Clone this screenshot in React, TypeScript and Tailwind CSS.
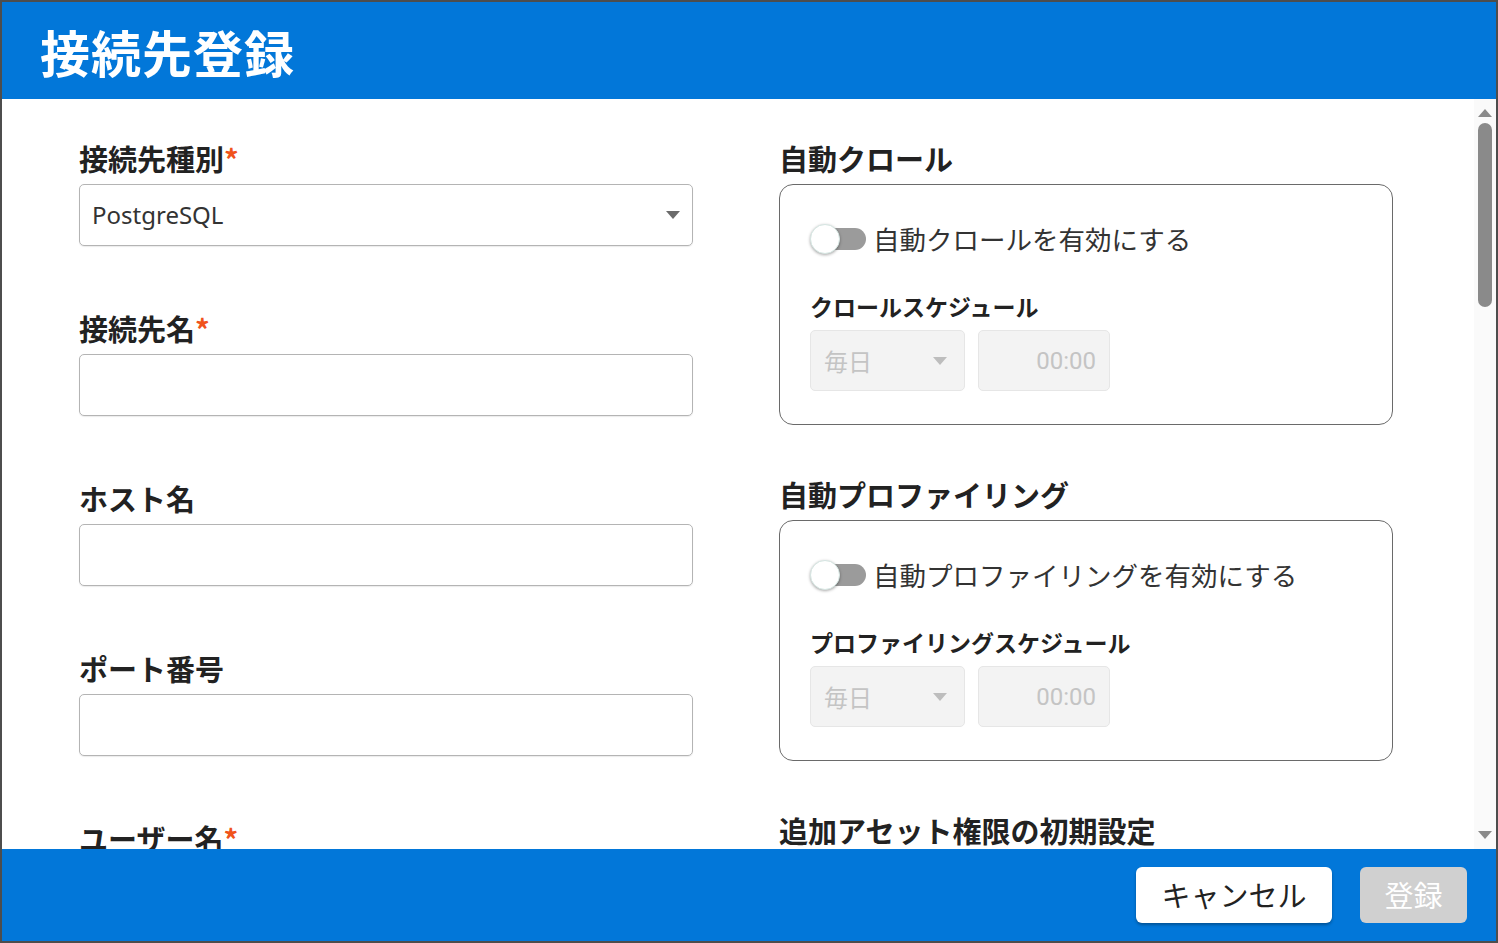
import React from "react";

const jp = "font-['Noto_Sans_CJK_JP','Noto_Sans',sans-serif]";

function Required() {
  return <span className="text-[#f0531c]">*</span>;
}

function Caret({ color }: { color: string }) {
  return (
    <svg width="14" height="8" viewBox="0 0 14 8">
      <path d="M0 0h14L7 8z" fill={color} />
    </svg>
  );
}

function Field({ label, required, value }: { label: string; required?: boolean; value?: string }) {
  return (
    <div className="mb-[65px]">
      <div className={`${jp} mb-[9px] text-[29px] font-bold leading-[34px] text-[#222]`}>
        {label}
        {required && <Required />}
      </div>
      <div className="flex h-[62px] items-center justify-between rounded-[5px] border border-[#b4b4b4] pl-[12px] pr-[12px] shadow-[0_1px_1px_rgba(0,0,0,0.08)]">
        <span className="font-['Noto_Sans',sans-serif] text-[24px] text-[#333]">{value}</span>
        {value && <Caret color="#6b6b6b" />}
      </div>
    </div>
  );
}

function Toggle() {
  return (
    <div className="relative h-[30px] w-[56px] shrink-0">
      <div className="absolute left-[6px] top-[4px] h-[22px] w-[50px] rounded-full bg-[#9b9b9b]" />
      <div className="absolute left-0 top-0 h-[30px] w-[30px] rounded-full border border-[#d5e6e2] bg-white shadow-[0_1px_3px_rgba(0,0,0,0.35)]" />
    </div>
  );
}

function ScheduleBox({ toggleLabel, scheduleLabel }: { toggleLabel: string; scheduleLabel: string }) {
  return (
    <div className="rounded-[14px] border-[1.5px] border-[#6a6a6a] pb-[33px] pl-[30px] pt-[37px]">
      <div className="flex h-[34px] items-center gap-[7px]">
        <Toggle />
        <span className={`${jp} text-[26.5px] leading-[34px] text-[#333]`}>{toggleLabel}</span>
      </div>
      <div className={`${jp} mt-[36px] text-[23px] font-bold leading-[28px] text-[#222]`}>{scheduleLabel}</div>
      <div className="mt-[10px] flex gap-[13px]">
        <div className="flex h-[61px] w-[155px] items-center justify-between rounded-[5px] border border-[#e6e6e6] bg-[#f3f3f3] pl-[13px] pr-[17px]">
          <span className={`${jp} text-[24px] text-[#c4c4c4]`}>毎日</span>
          <Caret color="#bdbdbd" />
        </div>
        <div className="flex h-[61px] w-[132px] items-center justify-end rounded-[5px] border border-[#e6e6e6] bg-[#f3f3f3] pr-[13px]">
          <span className="font-['Roboto',sans-serif] text-[24px] text-[#c4c4c4]">00:00</span>
        </div>
      </div>
    </div>
  );
}

function Section({ title, children }: { title: string; children?: React.ReactNode }) {
  return (
    <div className="mb-[52px]">
      <div className={`${jp} mb-[9px] text-[29px] font-bold leading-[34px] text-[#222]`}>{title}</div>
      {children}
    </div>
  );
}

export default function App() {
  return (
    <div className="flex h-[943px] w-[1498px] flex-col overflow-hidden border-2 border-[#4d4d4d] bg-white">
      {/* Header */}
      <header className="flex h-[97px] shrink-0 items-center bg-[#0277d9] pl-[38px]">
        <h1 className={`${jp} text-[50px] font-bold leading-none tracking-[1px] text-white`}>接続先登録</h1>
      </header>

      {/* Body */}
      <div className="flex min-h-0 flex-1">
        <div className="min-w-0 flex-1 overflow-hidden">
          <div className="grid grid-cols-[614px_614px] gap-x-[86px] pl-[77px] pt-[42px]">
            <div>
              <Field label="接続先種別" required value="PostgreSQL" />
              <Field label="接続先名" required />
              <Field label="ホスト名" />
              <Field label="ポート番号" />
              <Field label="ユーザー名" required />
            </div>
            <div>
              <Section title="自動クロール">
                <ScheduleBox toggleLabel="自動クロールを有効にする" scheduleLabel="クロールスケジュール" />
              </Section>
              <Section title="自動プロファイリング">
                <ScheduleBox toggleLabel="自動プロファイリングを有効にする" scheduleLabel="プロファイリングスケジュール" />
              </Section>
              <Section title="追加アセット権限の初期設定" />
            </div>
          </div>
        </div>

        {/* Scrollbar */}
        <div className="flex w-[22px] shrink-0 flex-col items-center bg-[#fafafa] pt-[10px] pb-[10px]">
          <svg width="14" height="8" viewBox="0 0 14 8">
            <path d="M7 0l7 8H0z" fill="#8a8a8a" />
          </svg>
          <div className="mt-[6px] h-[184px] w-[14px] rounded-full bg-[#8a8a8a]" />
          <div className="flex-1" />
          <svg width="14" height="8" viewBox="0 0 14 8">
            <path d="M0 0h14L7 8z" fill="#8a8a8a" />
          </svg>
        </div>
      </div>

      {/* Footer */}
      <footer className="flex h-[92px] shrink-0 items-center justify-end gap-[28px] bg-[#0277d9] pr-[29px]">
        <button className={`${jp} h-[56px] w-[196px] rounded-[6px] bg-white text-[29px] text-[#222] shadow-[0_2px_3px_rgba(0,0,0,0.3)]`}>
          キャンセル
        </button>
        <button className={`${jp} h-[56px] w-[107px] rounded-[6px] bg-[#d0d0d0] text-[29px] text-white`}>登録</button>
      </footer>
    </div>
  );
}
